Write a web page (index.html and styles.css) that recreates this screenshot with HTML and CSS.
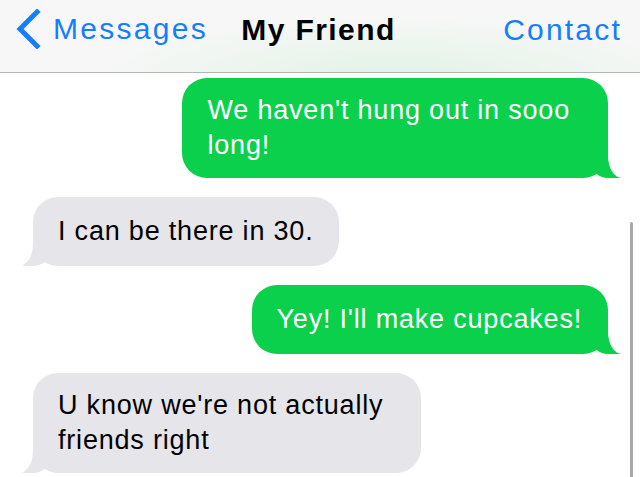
FILE: index.html
```
<!DOCTYPE html>
<html lang="en">
<head>
    <meta charset="UTF-8">
    <meta name="viewport" content="width=device-width, initial-scale=1.0">
    <title>My Friend</title>
    <link rel="stylesheet" href="styles.css">
</head>
<body>
    <div class="screen">
        <div class="nav-bar">
            <a class="nav-back" href="#">
                <svg class="chevron" width="26" height="40" viewBox="0 0 26 40">
                    <polyline points="22,3 5,20 22,37" fill="none" stroke="#147efb" stroke-width="5" stroke-linecap="square" stroke-linejoin="miter"/>
                </svg>
                <span>Messages</span>
            </a>
            <div class="nav-title">My Friend</div>
            <a class="nav-action" href="#">Contact</a>
        </div>

        <div class="thread">
            <div class="bubble bubble-out bubble-multi">We haven't hung out in sooo<br>long!</div>
            <div class="bubble bubble-in">I can be there in 30.</div>
            <div class="bubble bubble-out">Yey! I'll make cupcakes!</div>
            <div class="bubble bubble-in bubble-multi">U know we're not actually<br>friends right</div>
        </div>

        <div class="scrollbar"></div>
    </div>
</body>
</html>
```

FILE: styles.css
```
body {
    font-family: 'Liberation Sans', Arial, sans-serif;
    margin: 0;
    padding: 0;
    background: #ffffff;
    overflow: hidden;
}

.screen {
    position: relative;
    width: 640px;
    height: 477px;
    overflow: hidden;
}

/* top navigation */
.nav-bar {
    display: grid;
    grid-template-columns: 1fr auto 1fr;
    align-items: start;
    height: 73px;
    padding: 0 18px 0 15px;
    box-sizing: border-box;
    background: radial-gradient(ellipse at 62% 110%, rgba(205, 240, 214, 0.55), rgba(247, 247, 247, 0) 55%), #f7f7f7;
    border-bottom: 1px solid #b4b4b4;
}

.nav-back {
    display: flex;
    align-items: center;
    gap: 12px;
    justify-self: start;
    color: #147efb;
    text-decoration: none;
    font-size: 30px;
    letter-spacing: 2.3px;
    padding-top: 9px;
}

.chevron {
    display: block;
}

.nav-title {
    font-size: 30px;
    font-weight: bold;
    letter-spacing: 1.4px;
    color: #000;
    padding-top: 13px;
}

.nav-action {
    justify-self: end;
    color: #147efb;
    text-decoration: none;
    font-size: 30px;
    letter-spacing: 2.2px;
    padding-top: 13px;
}

/* message thread */
.thread {
    display: flex;
    flex-direction: column;
    gap: 19px;
    padding: 5px 32px 0 33px;
}

.bubble {
    position: relative;
    z-index: 0;
    box-sizing: border-box;
    min-height: 69px;
    display: flex;
    align-items: center;
    padding: 15px 26px 15px 25px;
    border-radius: 25px;
    font-size: 27px;
    line-height: 35px;
    letter-spacing: 0.8px;
}

.bubble-multi {
    padding-right: 38px;
}

.bubble::before,
.bubble::after {
    content: "";
    position: absolute;
    z-index: -1;
    bottom: 0;
}

.bubble-out {
    align-self: flex-end;
    background: #0bd04b;
    color: #ffffff;
}

.bubble-out::before {
    right: -12px;
    width: 28px;
    height: 26px;
    background: #0bd04b;
    border-bottom-left-radius: 16px 14px;
}

.bubble-out::after {
    right: -14px;
    width: 14px;
    height: 30px;
    background: #ffffff;
    border-bottom-left-radius: 14px 22px;
}

.bubble-in {
    align-self: flex-start;
    background: #e5e5ea;
    color: #000000;
}

.bubble-in::before {
    left: -10px;
    width: 26px;
    height: 26px;
    background: #e5e5ea;
    border-bottom-right-radius: 16px 14px;
}

.bubble-in::after {
    left: -14px;
    width: 14px;
    height: 30px;
    background: #ffffff;
    border-bottom-right-radius: 14px 22px;
}

.scrollbar {
    position: absolute;
    right: 7px;
    top: 222px;
    bottom: 0;
    width: 3px;
    background: #a8a8a8;
    border-radius: 2px 2px 0 0;
}
```
